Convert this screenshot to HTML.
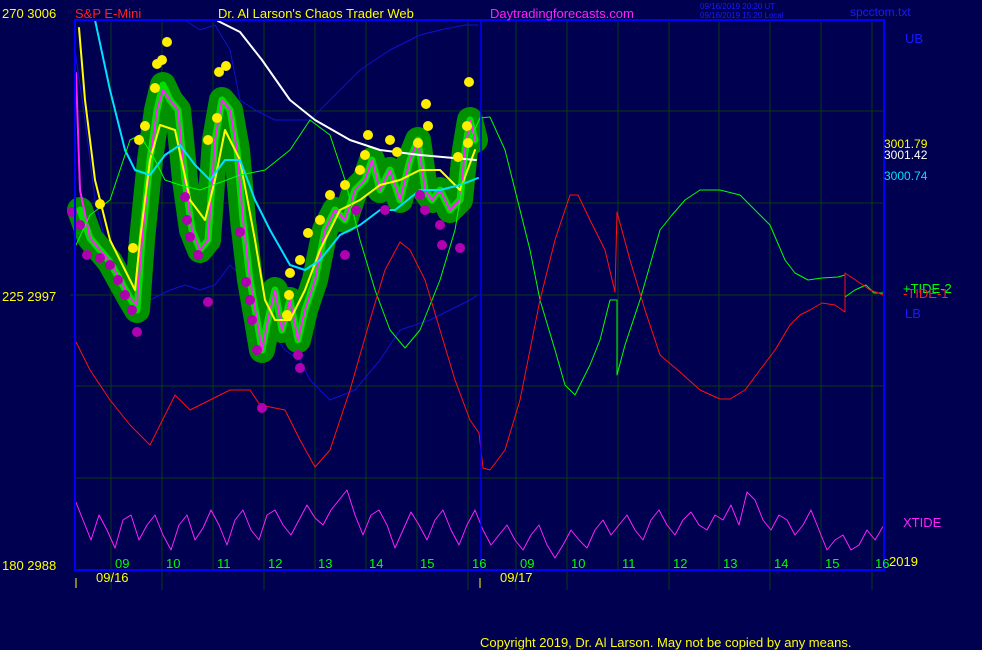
<!DOCTYPE html>
<html><head><meta charset="utf-8"><style>
body{margin:0;background:#000050;width:982px;height:650px;overflow:hidden}
svg{display:block}
text{font-family:"Liberation Sans",sans-serif;font-size:13px}
</style></head><body>
<svg width="982" height="650" viewBox="0 0 982 650" xmlns="http://www.w3.org/2000/svg">
<rect width="982" height="650" fill="#000050"/>
<g stroke="#0a3a10" stroke-width="1">
<line x1="111" y1="20" x2="111" y2="590"/><line x1="162" y1="20" x2="162" y2="590"/><line x1="213" y1="20" x2="213" y2="570"/><line x1="264" y1="20" x2="264" y2="590"/><line x1="315" y1="20" x2="315" y2="570"/><line x1="366" y1="20" x2="366" y2="570"/><line x1="417" y1="20" x2="417" y2="570"/><line x1="468" y1="20" x2="468" y2="590"/>
<line x1="516" y1="20" x2="516" y2="590"/><line x1="567" y1="20" x2="567" y2="590"/><line x1="618" y1="20" x2="618" y2="570"/><line x1="669" y1="20" x2="669" y2="590"/><line x1="719" y1="20" x2="719" y2="570"/><line x1="770" y1="20" x2="770" y2="590"/><line x1="821" y1="20" x2="821" y2="570"/><line x1="872" y1="20" x2="872" y2="590"/>
<line x1="75" y1="111" x2="884" y2="111"/><line x1="75" y1="203" x2="884" y2="203"/><line x1="70" y1="295" x2="884" y2="295"/><line x1="75" y1="386" x2="884" y2="386"/><line x1="75" y1="478" x2="884" y2="478"/>
</g>
<g fill="none" stroke-linejoin="round" stroke-linecap="round">
<polyline stroke="#1010d0" stroke-width="1" points="185,20 200,30 215,25 230,50 240,100 255,110 275,120 310,120 330,100 360,70 390,50 420,35 440,30 465,25 478,25"/>
<polyline stroke="#1010d0" stroke-width="1" points="75,50 85,120 95,200 110,260 130,290 150,300 170,290 185,285 200,290 215,285 230,265 240,275 250,305 270,330 285,350 300,360 310,380 330,400 355,390 380,360 400,330 430,320 450,310 470,300 478,295"/>
<polyline stroke="#009000" stroke-width="26" points="80,210 90,238 100,250 110,262 120,280 130,298 137,310 142,240 150,160 157,110 163,85 170,100 178,110 185,180 192,230 200,250 208,240 215,140 222,100 230,110 237,150 243,220 250,280 257,320 262,350 268,320 275,290 282,330 290,300 298,340 305,310 315,280 325,230 335,210 345,220 355,190 365,180 372,160 380,190 390,170 400,200 410,160 418,140 425,190 432,200 440,190 450,210 460,200 465,150 470,120 475,140"/>
<polyline stroke="#00e000" stroke-width="7" points="80,210 90,238 100,250 110,262 120,280 130,298 137,310 142,240 150,160 157,110 163,85 170,100 178,110 185,180 192,230 200,250 208,240 215,140 222,100 230,110 237,150 243,220 250,280 257,320 262,350 268,320 275,290 282,330 290,300 298,340 305,310 315,280 325,230 335,210 345,220 355,190 365,180 372,160 380,190 390,170 400,200 410,160 418,140 425,190 432,200 440,190 450,210 460,200 465,150 470,120 475,140"/>
<polyline stroke="#ff20ff" stroke-width="2" points="76,73 80,190 90,238 100,250 110,262 120,280 130,298 137,305 142,240 150,160 157,110 163,90 170,100 178,110 185,180 192,230 200,250 208,240 215,140 222,100 230,110 237,150 243,220 250,280 257,320 262,350 268,320 275,290 282,330 290,300 298,340 305,310 315,280 325,230 335,210 345,220 355,190 365,180 372,160 380,190 390,170 400,200 410,160 418,140 425,190 432,200 440,190 450,210 460,200 465,150 470,120 475,140"/>
<polyline stroke="#ffff00" stroke-width="2" points="79,28 85,100 95,180 110,240 125,270 135,290 140,240 150,160 160,125 175,130 190,200 205,220 215,180 225,130 240,160 255,240 265,300 275,320 290,320 305,290 320,250 340,210 360,200 380,185 400,180 420,170 440,170 460,190 475,150"/>
<polyline stroke="#00e0ff" stroke-width="2" points="95,20 110,90 125,150 135,170 150,175 165,155 180,145 195,165 210,180 225,160 240,160 255,200 270,230 290,265 305,270 320,260 340,235 360,225 380,210 395,210 420,190 440,190 460,185 478,178"/>
<polyline stroke="#ffffff" stroke-width="2" points="218,21 240,32 262,60 290,100 315,120 350,140 380,150 420,155 476,160"/>
<polyline stroke="#00ff00" stroke-width="1" points="76,245 90,215 110,200 130,140 140,135 155,160 165,180 180,185 200,190 240,175 265,170 290,150 310,120 330,135 345,180 360,240 375,290 390,330 405,348 420,330 440,280 455,230 470,140 480,118 490,117 505,150 515,190 530,250 540,300 555,350 565,385 575,395 590,365 600,340 610,300 617,300 617,375 625,345 640,300 650,265 660,230 672,215 685,200 700,190 720,190 740,195 755,210 770,225 785,260 795,273 808,280 822,278 838,277 845,275 845,297 855,290 866,285 874,293 884,293"/>
<polyline stroke="#ff1010" stroke-width="1" points="75,340 90,370 110,400 130,425 150,445 175,395 190,410 210,400 230,390 250,390 260,405 285,410 300,440 315,467 330,450 350,390 370,320 385,270 400,242 410,250 425,280 440,330 455,380 470,420 479,433 483,468 490,470 505,450 520,400 540,300 555,240 570,195 578,195 590,220 605,250 615,292 617,212 630,260 645,310 660,355 680,372 700,390 720,399 730,399 745,390 760,370 775,350 790,325 800,315 810,310 822,303 835,305 845,312 845,273 860,283 870,290 884,295"/>
<polyline stroke="#ff20ff" stroke-width="1" points="75,500 83,520 91,540 99,515 107,530 115,548 123,520 131,515 139,540 147,525 155,515 163,535 171,550 179,525 187,515 195,540 203,528 211,510 219,525 227,545 235,520 243,510 251,530 259,540 267,515 275,510 283,525 291,535 299,520 307,505 315,518 323,525 331,510 339,500 347,490 355,515 363,535 371,515 379,510 387,525 395,548 403,530 411,512 419,525 427,540 435,520 443,510 451,530 459,545 467,525 475,510 483,530 491,545 499,535 507,525 515,540 523,550 531,535 539,525 547,545 555,558 563,545 571,530 579,540 587,548 595,530 603,520 611,535 619,525 627,515 635,530 643,540 651,520 659,510 667,525 675,535 683,520 691,512 699,525 707,530 715,515 723,520 731,505 739,525 747,492 755,500 763,520 771,530 779,515 787,520 795,535 803,525 811,510 819,530 827,550 835,540 843,535 851,550 859,545 867,530 875,540 884,525"/>
</g>
<g fill="#ffee00">
<circle cx="167" cy="42" r="5"/><circle cx="157" cy="64" r="5"/><circle cx="162" cy="60" r="5"/><circle cx="155" cy="88" r="5"/><circle cx="145" cy="126" r="5"/><circle cx="139" cy="140" r="5"/><circle cx="133" cy="248" r="5"/><circle cx="100" cy="204" r="5"/><circle cx="226" cy="66" r="5"/><circle cx="219" cy="72" r="5"/><circle cx="217" cy="118" r="5"/><circle cx="208" cy="140" r="5"/><circle cx="290" cy="273" r="5"/><circle cx="289" cy="295" r="5"/><circle cx="287" cy="315" r="5"/><circle cx="308" cy="233" r="5"/><circle cx="320" cy="220" r="5"/><circle cx="330" cy="195" r="5"/><circle cx="345" cy="185" r="5"/><circle cx="360" cy="170" r="5"/><circle cx="368" cy="135" r="5"/><circle cx="365" cy="155" r="5"/><circle cx="390" cy="140" r="5"/><circle cx="397" cy="152" r="5"/><circle cx="418" cy="143" r="5"/><circle cx="428" cy="126" r="5"/><circle cx="426" cy="104" r="5"/><circle cx="458" cy="157" r="5"/><circle cx="469" cy="82" r="5"/><circle cx="467" cy="126" r="5"/><circle cx="468" cy="143" r="5"/><circle cx="300" cy="260" r="5"/>
</g>
<g fill="#b000b0">
<circle cx="72" cy="212" r="5"/><circle cx="80" cy="225" r="5"/><circle cx="87" cy="255" r="5"/><circle cx="100" cy="258" r="5"/><circle cx="110" cy="265" r="5"/><circle cx="118" cy="280" r="5"/><circle cx="125" cy="295" r="5"/><circle cx="132" cy="310" r="5"/><circle cx="137" cy="332" r="5"/><circle cx="185" cy="197" r="5"/><circle cx="187" cy="220" r="5"/><circle cx="190" cy="237" r="5"/><circle cx="198" cy="255" r="5"/><circle cx="208" cy="302" r="5"/><circle cx="246" cy="282" r="5"/><circle cx="250" cy="300" r="5"/><circle cx="252" cy="320" r="5"/><circle cx="257" cy="350" r="5"/><circle cx="262" cy="408" r="5"/><circle cx="298" cy="355" r="5"/><circle cx="300" cy="368" r="5"/><circle cx="240" cy="232" r="5"/><circle cx="345" cy="255" r="5"/><circle cx="356" cy="210" r="5"/><circle cx="385" cy="210" r="5"/><circle cx="420" cy="195" r="5"/><circle cx="425" cy="210" r="5"/><circle cx="440" cy="225" r="5"/><circle cx="442" cy="245" r="5"/><circle cx="460" cy="248" r="5"/>
</g>
<rect x="75" y="20" width="809" height="550" fill="none" stroke="#0000ff" stroke-width="2"/>
<line x1="481" y1="20" x2="481" y2="570" stroke="#0000ff" stroke-width="1.5"/>
<line x1="76" y1="578" x2="76" y2="588" stroke="#ffff00"/><line x1="480" y1="578" x2="480" y2="588" stroke="#ffff00"/>
<text x="2" y="18" fill="#ffff00">270  3006</text>
<text x="75" y="18" fill="#ff2020">S&amp;P E-Mini</text>
<text x="218" y="18" fill="#ffff00">Dr. Al Larson's Chaos Trader Web</text>
<text x="490" y="18" fill="#ff20ff">Daytradingforecasts.com</text>
<text x="700" y="9" fill="#1a1aff" style="font-size:8px">09/16/2019 20:20 UT</text>
<text x="700" y="18" fill="#1a1aff" style="font-size:8px">09/16/2019 15:20 Local</text>
<text x="850" y="16" fill="#1a1aff" style="font-size:12px">spcctom.txt</text>
<text x="905" y="43" fill="#1a1aff">UB</text>
<text x="884" y="148" fill="#ffff00" style="font-size:12px">3001.79</text>
<text x="884" y="159" fill="#ffffff" style="font-size:12px">3001.42</text>
<text x="884" y="180" fill="#00e0ff" style="font-size:12px">3000.74</text>
<text x="903" y="293" fill="#00ff00">+TIDE-2</text>
<text x="903" y="298" fill="#ff2020">-TIDE-1</text>
<text x="905" y="318" fill="#1a1aff">LB</text>
<text x="903" y="527" fill="#ff20ff">XTIDE</text>
<text x="889" y="566" fill="#ffff00">2019</text>
<text x="2" y="301" fill="#ffff00">225  2997</text>
<text x="2" y="570" fill="#ffff00">180  2988</text>
<g fill="#00ff00">
<text x="115" y="568">09</text><text x="166" y="568">10</text><text x="217" y="568">11</text><text x="268" y="568">12</text><text x="318" y="568">13</text><text x="369" y="568">14</text><text x="420" y="568">15</text><text x="472" y="568">16</text>
<text x="520" y="568">09</text><text x="571" y="568">10</text><text x="622" y="568">11</text><text x="673" y="568">12</text><text x="723" y="568">13</text><text x="774" y="568">14</text><text x="825" y="568">15</text><text x="875" y="568">16</text>
</g>
<text x="96" y="582" fill="#ffff00">09/16</text>
<text x="500" y="582" fill="#ffff00">09/17</text>
<text x="480" y="647" fill="#ffff00">Copyright 2019, Dr. Al Larson. May not be copied by any means.</text>
</svg>
</body></html>
